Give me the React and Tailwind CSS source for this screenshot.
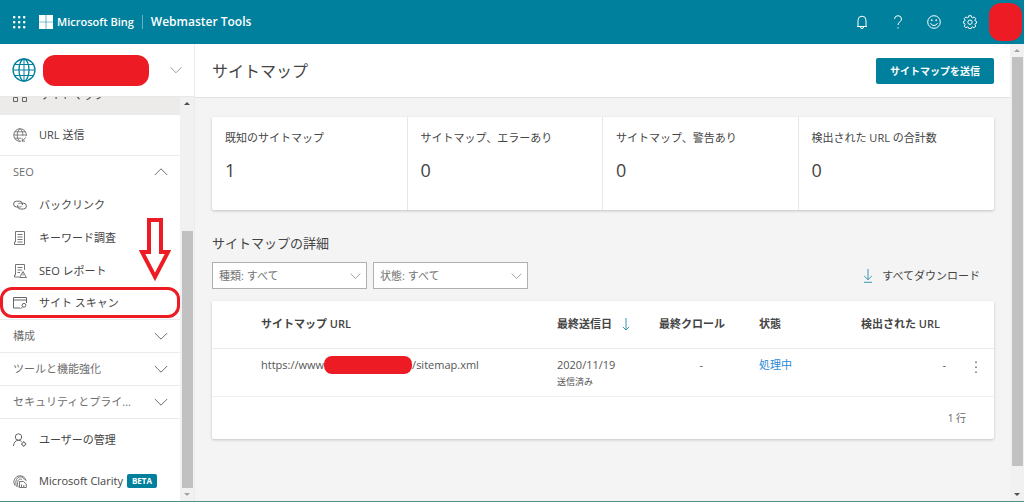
import React from "react";

const FONT =
  "font-['Open_Sans','Noto_Sans_CJK_JP',sans-serif]";

function Svg({ size = 14, className = "", children, box = 14, sw = 1 }) {
  return (
    <svg
      width={size}
      height={size}
      viewBox={`0 0 ${box} ${box}`}
      fill="none"
      stroke="currentColor"
      strokeWidth={sw}
      className={`shrink-0 ${className}`}
      aria-hidden="true"
    >
      {children}
    </svg>
  );
}

const GlobeIcon = ({ size }) => (
  <Svg size={size} box={24} sw={1.3}>
    <circle cx="12" cy="12" r="11" />
    <ellipse cx="12" cy="12" rx="5" ry="11" />
    <path d="M12 1v22M1 12h22M2.800 6.500h18.400M2.800 17.500h18.400" strokeWidth="1" />
  </Svg>
);

const UrlIcon = () => (
  <Svg sw={0.9}>
    <path d="M8 13.300A6.300 6.300 0 1 1 13.300 8" />
    <path d="M6.800 13.300C3.400 11 3.400 3 7 .7c2 1.600 3 4 2.800 7M.8 7h12.400M1.600 3.800h10.800M1.600 10.200h6.400" strokeWidth=".8" />
    <path d="M13 9.300l-3.800 3.800M9.200 10.200v2.900h2.900" />
  </Svg>
);

const LinkIcon = () => (
  <Svg>
    <path d="M8.600 8.200A2.900 2.900 0 0 1 6.600 9H3.500a2.900 2.900 0 0 1 0-5.800h3.100a2.900 2.900 0 0 1 2.700 3.900" />
    <path d="M5.400 6A2.900 2.900 0 0 1 7.400 5.200h3.100a2.900 2.900 0 0 1 0 5.800H7.400a2.900 2.900 0 0 1-2.700-3.900" />
  </Svg>
);

const KeywordIcon = () => (
  <Svg sw={0.9}>
    <path d="M2.500.5h9v13h-10v-2.500h1zM4.500 3.500h5M4.500 6h5M4.500 8.500h5M4.500 11h5" />
  </Svg>
);

const ReportIcon = () => (
  <Svg sw={0.9}>
    <path d="M11.500 6V.5h-9v10.500h-1v2H6M4.500 3.500h5M4.500 6h4.500M4.500 8.500h2.500" />
    <path d="M10 7.500l3.400 6H6.600zM10 9.500v2" />
  </Svg>
);

const ScanIcon = () => (
  <Svg>
    <path d="M7 12H.5V1.500h13V7M.5 4h13" />
    <circle cx="11" cy="9.300" r="1.900" />
    <path d="M9.600 10.700l-2.200 2.200" />
  </Svg>
);

const UserIcon = () => (
  <Svg>
    <circle cx="5.500" cy="4" r="3.200" />
    <path d="M.6 13c0-3.500 2-5.700 4.900-5.700 1.300 0 2.300.4 3.100 1.200" />
    <circle cx="10.700" cy="11" r="1.800" />
    <path d="M10.700 8.300v.9M10.700 12.800v.9M8 11h.9M12.500 11h.9" />
  </Svg>
);

const ClarityIcon = () => (
  <Svg sw={0.9}>
    <path d="M2 11.500A6.200 6.200 0 1 1 13.200 7M3.600 12.700C1.500 7 4 2.800 7.300 2.800c2 0 3.500 1.200 4.200 3M5.300 13.300C3.500 9 5 5 7.300 5c.8 0 1.500.4 1.900 1" />
    <path d="M6.500 13.500v-6h4l2.800 2.500v3.500zM8.500 13v-2.500M10.800 13v-2" />
  </Svg>
);

const SitemapIcon = () => (
  <Svg>
    <path d="M4.500.5h5v4h-5zM.5 9.500h4v4h-4zM9.500 9.500h4v4h-4zM7 4.500V7M2.500 9.500V7h9v2.500" />
  </Svg>
);

const Chevron = ({ up = false, className = "" }) => (
  <svg
    width="14"
    height="8"
    viewBox="0 0 14 8"
    fill="none"
    stroke="currentColor"
    className={`shrink-0 ${className}`}
    aria-hidden="true"
  >
    <path d={up ? "M.8 7L7 .8 13.200 7" : "M.8 1L7 7.200 13.200 1"} />
  </svg>
);

function NavLink({ icon: Icon, label, height = "h-[33px]", extra = "", badge, children }) {
  return (
    <a
      href="#"
      className={`relative flex shrink-0 items-center pl-[13px] text-[#444] ${height} ${extra}`}
    >
      <span className="text-[#666]">
        <Icon />
      </span>
      <span className="ml-3">{label}</span>
      {badge && (
        <span className="ml-1 rounded-xs bg-[#00809d] px-[5px] text-[8px] leading-[14px] font-bold text-white">
          {badge}
        </span>
      )}
      {children}
    </a>
  );
}

function NavGroup({ label, open = false, height = "h-[33px]" }) {
  return (
    <button
      type="button"
      aria-expanded={open}
      className={`flex shrink-0 items-center justify-between pr-3 pl-[13px] text-[#6e6e6e] ${height} ${
        open ? "" : "border-b border-[#ebebeb]"
      }`}
    >
      <span>{label}</span>
      <Chevron up={open} />
    </button>
  );
}

function Scrollbar({ thumb, dimTop = false, dimBottom = false }) {
  return (
    <div className="flex w-[14px] shrink-0 flex-col items-center bg-[#f1f1f1]" aria-hidden="true">
      <svg width="6" height="13" viewBox="0 0 6 13" className="shrink-0">
        <path d="M3 5l3 3H0z" fill={dimTop ? "#a3a3a3" : "#505050"} />
      </svg>
      <div className={`flex w-[11px] flex-1 flex-col ${thumb}`} />
      <svg width="6" height="13" viewBox="0 0 6 13" className="shrink-0">
        <path d="M3 8l3-3H0z" fill={dimBottom ? "#a3a3a3" : "#505050"} />
      </svg>
    </div>
  );
}

function Header() {
  const dots = [1, 6, 11];
  return (
    <header className="flex h-11 shrink-0 items-center bg-[#00809d] pr-0.5 pl-3 text-white">
      <button type="button" aria-label="Apps">
        <svg width="14" height="14" viewBox="0 0 14 14" fill="currentColor" aria-hidden="true">
          {dots.flatMap((y) =>
            dots.map((x) => <rect key={`${x}-${y}`} x={x} y={y} width="2.4" height="2.4" rx=".8" />)
          )}
        </svg>
      </button>
      <svg width="14" height="14" viewBox="0 0 14 14" fill="currentColor" className="ml-[13px]" aria-hidden="true">
        <path d="M0 0h6.700v6.700H0zM7.300 0H14v6.700H7.300zM0 7.300h6.700V14H0zM7.300 7.300H14V14H7.300z" />
      </svg>
      <span className="ml-1 text-[11px] font-semibold">Microsoft Bing</span>
      <span className="mx-2 h-3.5 w-px bg-white/40" />
      <span className="text-xs font-semibold">Webmaster Tools</span>
      <div className="ml-auto flex items-center gap-[22px]">
        <button type="button" aria-label="Notifications">
          <Svg>
            <path d="M2 11.500h10M3 11.500V5.200a4 4 0 0 1 8 0v6.300M5.500 12a1.500 1.500 0 0 0 3 0" />
          </Svg>
        </button>
        <button type="button" aria-label="Help">
          <Svg>
            <path d="M3.500 4A3.500 3.500 0 0 1 7 .7 3.400 3.400 0 0 1 10.500 4c0 2.800-3.500 3-3.500 6M7 12.200v1.300" />
          </Svg>
        </button>
        <button type="button" aria-label="Feedback">
          <Svg>
            <circle cx="7" cy="7" r="6.300" />
            <path d="M3.600 8.200c1.200 3 5.600 3 6.800 0" />
            <circle cx="4.800" cy="5.200" r=".5" fill="currentColor" />
            <circle cx="9.200" cy="5.200" r=".5" fill="currentColor" />
          </Svg>
        </button>
        <button type="button" aria-label="Settings">
          <Svg>
            <path d="M5.800.7h2.400l.4 1.700 1 .4 1.500-.9 1.700 1.700-.9 1.500.4 1 1.200.3v1.800l-1.200.4-.4 1 .9 1.500-1.700 1.700-1.500-.9-1 .4-.4 1.200H5.800l-.4-1.200-1-.4-1.500.9-1.700-1.700.9-1.500-.4-1L.6 8.200V6.400l1.100-.3.4-1-.9-1.500 1.700-1.700 1.500.9 1-.4z" />
            <circle cx="7" cy="7.200" r="2.200" />
          </Svg>
        </button>
        <span className="-ml-2.5 h-[38px] w-[33px] rounded-xl bg-[#ed1c24]" />
      </div>
    </header>
  );
}

function Sidebar() {
  return (
    <aside className="flex w-[195px] shrink-0 flex-col border-r border-[#ebebeb] bg-white">
      <div className="flex h-[53px] shrink-0 items-center border-b border-[#e8e8e8] pr-3 pl-3">
        <span className="text-[#00809d]">
          <GlobeIcon size={24} />
        </span>
        <span className="ml-[7px] h-[31px] w-[106px] rounded-xl bg-[#ed1c24]" />
        <button type="button" aria-label="Site" className="ml-auto text-[#888]">
          <Chevron className="w-3" />
        </button>
      </div>
      <div className="flex min-h-0 flex-1">
        <nav className="flex min-w-0 flex-1 flex-col justify-end overflow-hidden">
          <NavLink icon={SitemapIcon} label="サイトマップ" height="h-[41px]" extra="bg-[#edebe9]" />
          <NavLink icon={UrlIcon} label="URL 送信" height="h-[41px]" extra="border-b border-[#ebebeb]" />
          <NavGroup label="SEO" open height="h-8" />
          <NavLink icon={LinkIcon} label="バックリンク" />
          <NavLink icon={KeywordIcon} label="キーワード調査" />
          <NavLink icon={ReportIcon} label="SEO レポート" />
          <NavLink icon={ScanIcon} label="サイト スキャン" extra="border-b border-[#ebebeb]">
            <svg
              width="32"
              height="64"
              viewBox="0 0 32 64"
              fill="#fff"
              stroke="#ed1c24"
              strokeWidth="4"
              className="absolute right-[9px] bottom-[37px]"
              aria-hidden="true"
            >
              <path d="M10 2h12v32h7L16 59 3 34h7z" />
            </svg>
            <span className="absolute inset-x-0 top-0 h-[31px] rounded-xl border-[3px] border-[#ed1c24]" />
          </NavLink>
          <NavGroup label="構成" />
          <NavGroup label="ツールと機能強化" />
          <NavGroup label="セキュリティとプライ..." />
          <NavLink icon={UserIcon} label="ユーザーの管理" height="h-[41px]" />
          <NavLink icon={ClarityIcon} label="Microsoft Clarity" height="h-[41px]" badge="BETA" />
        </nav>
        <Scrollbar thumb="bg-linear-to-b from-transparent from-[32%] to-[#c1c1c1] to-[32%]" dimBottom />
      </div>
    </aside>
  );
}

const STATS = [
  ["既知のサイトマップ", "1"],
  ["サイトマップ、エラーあり", "0"],
  ["サイトマップ、警告あり", "0"],
  ["検出された URL の合計数", "0"],
];

function Filter({ label }) {
  return (
    <div className="relative w-[155px]">
      <select
        aria-label={label}
        className="block h-[27px] w-full appearance-none border border-[#b0b0b0] bg-white pl-1.5 text-[11px] text-[#737373]"
      >
        <option>{label}</option>
      </select>
      <Chevron className="pointer-events-none absolute top-[10px] right-1.5 w-[11px] text-[#888]" />
    </div>
  );
}

function Main() {
  return (
    <main className="flex min-w-0 flex-1">
      <div className="flex min-w-0 flex-1 flex-col bg-[#f4f4f4]">
        <div className="flex h-[54px] shrink-0 items-center justify-between border-b border-[#e1e1e1] bg-white pr-4 pl-[17px]">
          <h1 className="text-[16px] leading-6 text-[#444]">サイトマップ</h1>
          <button
            type="button"
            className="h-[26px] rounded-xs bg-[#00809d] px-[14px] text-[10px] font-bold text-white"
          >
            サイトマップを送信
          </button>
        </div>
        <div className="flex flex-col pt-[19px] pr-4 pl-[17px]">
          <div className="grid h-[93px] grid-cols-4 divide-x divide-[#e6e6e6] rounded-xs bg-white shadow-[0_1px_3px_rgba(0,0,0,0.2)]">
            {STATS.map(([label, value]) => (
              <div key={label} className="px-[13px] pt-[13px]">
                <div className="leading-4">{label}</div>
                <div className="mt-3 text-[18px] leading-6">{value}</div>
              </div>
            ))}
          </div>
          <h2 className="mt-6 text-[13px] leading-[18px]">サイトマップの詳細</h2>
          <div className="mt-[10px] flex items-center gap-[6px]">
            <Filter label="種類: すべて" />
            <Filter label="状態: すべて" />
            <button type="button" className="mr-[14px] ml-auto flex items-center gap-[9px]">
              <svg width="10" height="14" viewBox="0 0 10 14" fill="none" stroke="#3a97ad" aria-hidden="true">
                <path d="M5 0v10.500M1.200 7L5 10.700 8.800 7M1 13.300h8" />
              </svg>
              すべてダウンロード
            </button>
          </div>
          <div className="mt-3 rounded-xs bg-white shadow-[0_1px_3px_rgba(0,0,0,0.2)]">
            <table className="w-full table-fixed text-left">
              <colgroup>
                <col className="w-[49px]" />
                <col />
                <col className="w-[102px]" />
                <col className="w-[100px]" />
                <col className="w-[82px]" />
                <col className="w-[109px]" />
                <col className="w-[44px]" />
              </colgroup>
              <thead>
                <tr className="h-[47px] border-b border-[#ebebeb] whitespace-nowrap">
                  <td />
                  <th scope="col" className="font-semibold">サイトマップ URL</th>
                  <th scope="col" className="font-semibold">
                    <span className="flex items-center gap-[10px]">
                      最終送信日
                      <svg width="8" height="13" viewBox="0 0 8 13" fill="none" stroke="#3a97ad" aria-hidden="true">
                        <path d="M4 0v12M.8 8.800L4 12l3.200-3.200" />
                      </svg>
                    </span>
                  </th>
                  <th scope="col" className="font-semibold">最終クロール</th>
                  <th scope="col" className="font-semibold">状態</th>
                  <th scope="col" className="pr-[10px] text-right font-semibold">検出された URL</th>
                  <td />
                </tr>
              </thead>
              <tbody>
                <tr className="h-12 border-b border-[#f0f0f0] align-top text-[#555]">
                  <td />
                  <td className="pt-[7px]">
                    <span className="flex items-center">
                      https://www
                      <span className="h-[18px] w-[88px] rounded-lg bg-[#ed1c24]" />
                      /sitemap.xml
                    </span>
                  </td>
                  <td className="pt-[7px]">
                    <div>2020/11/19</div>
                    <div className="text-[9px] leading-4">送信済み</div>
                  </td>
                  <td className="pt-[7px] pr-14 text-right">-</td>
                  <td className="pt-[7px]">
                    <a href="#" className="text-[#2b88d8]">処理中</a>
                  </td>
                  <td className="pt-[7px] pr-1 text-right">-</td>
                  <td className="pt-[7px] pr-4 text-right">
                    <button type="button" aria-label="More" className="h-[18px]">
                      <svg width="4" height="14" viewBox="0 0 4 14" fill="#666" className="mt-1" aria-hidden="true">
                        <path d="M1.300 1.500h1.400v1.400H1.300zM1.300 6.500h1.400v1.400H1.300zM1.300 11.500h1.400v1.400H1.300z" />
                      </svg>
                    </button>
                  </td>
                </tr>
              </tbody>
            </table>
            <div className="flex h-[42px] items-center justify-end pr-7 text-[10px] text-[#666]">1 行</div>
          </div>
        </div>
      </div>
      <Scrollbar thumb="bg-linear-to-b from-[#c1c1c1] from-[95%] to-transparent to-[95%]" dimTop />
    </main>
  );
}

export default function App() {
  return (
    <div
      className={`flex h-screen flex-col overflow-hidden border-b border-[#4f8f86] bg-white text-[11px] leading-[18px] text-[#444] ${FONT}`}
    >
      <Header />
      <div className="flex min-h-0 flex-1">
        <Sidebar />
        <Main />
      </div>
    </div>
  );
}
